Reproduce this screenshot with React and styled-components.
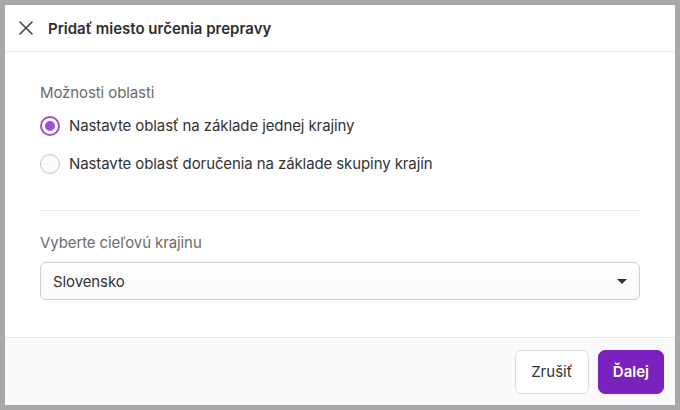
import React, { useState } from 'react';
import styled, { createGlobalStyle } from 'styled-components';

const Global = createGlobalStyle`
  html, body { margin: 0; padding: 0; }
  body {
    background: #a8a8a8;
    font-family: Inter, "Noto Sans", sans-serif;
    color: #333;
  }
`

const Frame = styled.div`
  padding: 5px;
  width: 680px;
  height: 410px;
  box-sizing: border-box;
`
const Modal = styled.div`
  width: 670px;
  height: 400px;
  background: #fff;
  display: flex;
  flex-direction: column;
`
const Header = styled.div`
  height: 46px;
  border-bottom: 1px solid #e6e6e6;
  display: flex;
  align-items: center;
  padding-left: 13px;
  gap: 14px;
`
const CloseButton = styled.button`
  border: 0;
  background: none;
  padding: 0;
  width: 16px;
  height: 16px;
  display: flex;
  align-items: center;
  justify-content: center;
  cursor: pointer;
`
const Title = styled.div`
  font-size: 15px;
  font-weight: 600;
  color: #2e2e2e;
`
const Body = styled.div`
  flex: 1;
  padding: 31px 35px 0 35px;
  letter-spacing: -0.1px;
`
const Label = styled.div`
  font-size: 15px;
  line-height: 20px;
  color: #6b6b6b;
`
const RadioList = styled.div`
  display: flex;
  flex-direction: column;
  gap: 18px;
  margin-top: 13px;
`
const RadioRow = styled.label`
  display: flex;
  align-items: center;
  gap: 9px;
  font-size: 15px;
  line-height: 20px;
  color: #333;
  cursor: pointer;
`
const RadioDot = styled.span`
  width: 20px;
  height: 20px;
  box-sizing: border-box;
  border-radius: 50%;
  border: ${p => (p.$checked ? '2px solid #9b4fdb' : '1.5px solid #c4c4c4')};
  background: ${p => (p.$checked ? '#fff' : '#fbfbfb')};
  display: flex;
  align-items: center;
  justify-content: center;
  &::after {
    content: '';
    width: 10px;
    height: 10px;
    border-radius: 50%;
    background: #9b4fdb;
    display: ${p => (p.$checked ? 'block' : 'none')};
  }
`
const Divider = styled.hr`
  border: 0;
  border-top: 1px solid #e8e8e8;
  margin: 36px 0 22px 0;
`
const Select = styled.div`
  margin-top: 9px;
  height: 38px;
  box-sizing: border-box;
  border: 1px solid #cfcfcf;
  border-radius: 6px;
  background: linear-gradient(#fff, #fafafa);
  display: flex;
  align-items: center;
  justify-content: space-between;
  padding: 0 12px 0 12px;
  font-size: 15px;
  color: #333;
`
const Caret = styled.span`
  width: 0;
  height: 0;
  border-left: 5px solid transparent;
  border-right: 5px solid transparent;
  border-top: 5px solid #333;
`
const Footer = styled.div`
  height: 67px;
  border-top: 1px solid #e6e6e6;
  background: #fafafa;
  display: flex;
  align-items: center;
  justify-content: flex-end;
  gap: 9px;
  padding-right: 11px;
`
const Button = styled.button`
  height: 44px;
  padding: 0 ${p => (p.$primary ? 14 : 15.5)}px;
  border-radius: 7px;
  font-family: Inter, "Noto Sans", sans-serif;
  font-size: 15px;
  cursor: pointer;
  border: 1px solid ${p => (p.$primary ? '#7a22bd' : '#dcdcdc')};
  background: ${p => (p.$primary ? '#7a22bd' : '#fff')};
  color: ${p => (p.$primary ? '#fff' : '#333')};
  font-weight: ${p => (p.$primary ? 600 : 400)};
`

const options = [
  'Nastavte oblasť na základe jednej krajiny',
  'Nastavte oblasť doručenia na základe skupiny krajín',
]

export default function App() {
  const [choice, setChoice] = useState(0)
  return (
    <Frame>
      <Global />
      <Modal>
        <Header>
          <CloseButton aria-label="Zavrieť">
            <svg width="14" height="14" viewBox="0 0 14 14">
              <path d="M1 1L13 13M13 1L1 13" stroke="#444" strokeWidth="1.6" strokeLinecap="round" />
            </svg>
          </CloseButton>
          <Title>Pridať miesto určenia prepravy</Title>
        </Header>
        <Body>
          <Label>Možnosti oblasti</Label>
          <RadioList>
            {options.map((o, i) => (
              <RadioRow key={o} onClick={() => setChoice(i)}>
                <RadioDot $checked={choice === i} />
                {o}
              </RadioRow>
            ))}
          </RadioList>
          <Divider />
          <Label>Vyberte cieľovú krajinu</Label>
          <Select>
            Slovensko
            <Caret />
          </Select>
        </Body>
        <Footer>
          <Button>Zrušiť</Button>
          <Button $primary>Ďalej</Button>
        </Footer>
      </Modal>
    </Frame>
  )
}
